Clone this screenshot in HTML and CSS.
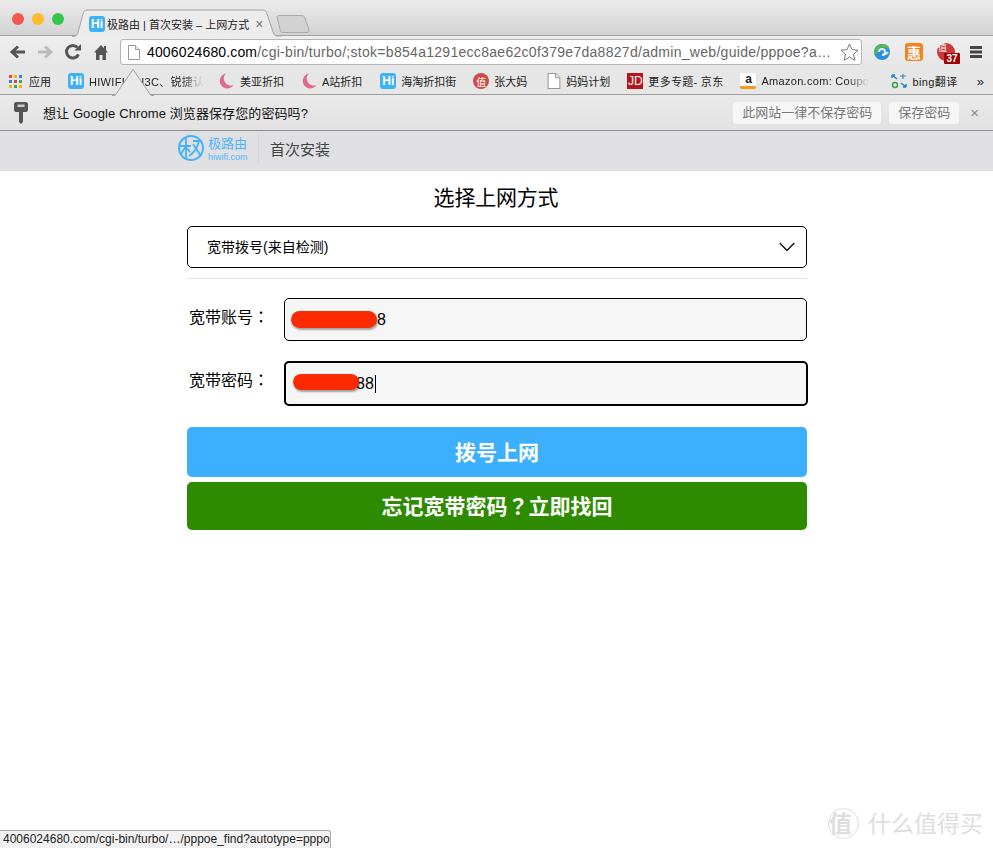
FILE: index.html
```html
<!DOCTYPE html>
<html lang="en">
<head>
  <meta charset="UTF-8">
  <title>极路由 | 首次安装 – 上网方式</title>
  <link rel="stylesheet" href="styles.css">
</head>
<body>
  <div class="tabstrip">
    <div class="lights">
      <span class="light red"></span>
      <span class="light yellow"></span>
      <span class="light green"></span>
    </div>
    <svg class="tab-shape" width="210" height="28" viewBox="0 0 210 28">
      <path d="M0 27.500h1c3 0 4-1 5-4L11 5c1-3 2-4 5-4h174c3 0 4 1 5 4l6 18c1 3 2 4 5 4h4" fill="#ececec" stroke="#a4a4a4"/>
    </svg>
    <div class="tab">
      <span class="hi hi-tab">Hi</span>
      <span class="tab-title">极路由 | 首次安装 – 上网方式</span>
      <span class="tab-close">×</span>
    </div>
    <svg class="new-tab" width="34" height="20" viewBox="0 0 34 20">
      <path d="M1 2c0-1 1-1.500 2-1.500h23c1 0 2 .5 2.500 1.500l4.500 13c.3 1.500-.5 2.500-2 2.500H7c-1 0-2-.5-2.500-1.500z" fill="#d2d2d2" stroke="#a8a8a8"/>
    </svg>
  </div>

  <div class="toolbar">
    <div class="nav">
      <svg width="18" height="16" viewBox="0 0 18 16"><path d="M17 8H5M10 2.500 4 8l6 5.500" fill="none" stroke="#555" stroke-width="3"/></svg>
      <svg width="18" height="16" viewBox="0 0 18 16"><path d="M2 8h12M9 2.500 15 8l-6 5.500" fill="none" stroke="#bbb" stroke-width="3"/></svg>
      <svg width="18" height="18" viewBox="0 0 18 18"><path d="M14.500 11.500A6.300 6.300 0 1 1 13.500 4.500" fill="none" stroke="#555" stroke-width="3"/><path d="M10.500 7.500H17V1z" fill="#555"/></svg>
      <svg width="18" height="16" viewBox="0 0 18 16"><path d="M9 1 2 8.500h2V16h3.500v-5h3v5H14V8.500h2L14 6.300V2h-2v2.200z" fill="#555"/></svg>
    </div>
    <div class="omnibox">
      <svg class="doc" width="12" height="15" viewBox="0 0 12 15"><path d="M.5.500h7l4 4v10H.5z" fill="#fff" stroke="#999"/><path d="M7.500.500v4h4" fill="#eee" stroke="#999"/></svg>
      <span class="url"><b>4006024680.com</b>/cgi-bin/turbo/;stok=b854a1291ecc8ae62c0f379e7da8827d/admin_web/guide/pppoe?a…</span>
      <svg class="star" width="19" height="18" viewBox="0 0 19 18"><path d="m9.500 1 2.500 5.600 6 .6-4.500 4 1.300 6-5.300-3.100-5.300 3.100 1.300-6-4.500-4 6-.6z" fill="#fff" stroke="#777"/></svg>
    </div>
    <div class="extensions">
      <svg width="18" height="18" viewBox="0 0 18 18"><circle cx="9" cy="9" r="8" fill="#2d8fd6"/><path d="M3 11A7 7 0 0 1 15 5" fill="none" stroke="#59b946" stroke-width="3"/><path d="M6 9a3 3 0 1 1 3 3c2 0 4 0 6-3" fill="none" stroke="#dff0f8" stroke-width="2"/></svg>
      <span class="ext-hui">惠</span>
      <span class="ext-seal"><span class="ext-glyph">值</span><span class="ext-badge">37</span></span>
      <svg width="14" height="14" viewBox="0 0 14 14"><path d="M1 2.500h12M1 7h12M1 11.500h12" stroke="#444" stroke-width="3"/></svg>
    </div>
  </div>

  <div class="bookmarks">
    <div class="bm bm-apps">
      <span class="apps-grid">
        <i class="g-r"></i><i class="g-y"></i><i class="g-b"></i>
        <i class="g-b"></i><i class="g-r"></i><i class="g-g"></i>
        <i class="g-y"></i><i class="g-g"></i><i class="g-y"></i>
      </span>
      <span>应用</span>
    </div>
    <div class="bm bm-hiwifi"><span class="hi">Hi</span><span class="bm-fade">HIWIFI、H3C、锐捷认</span></div>
    <div class="bm bm-moon-first"><svg class="moon" width="16" height="16" viewBox="0 0 16 16"><path d="M8 .5A7.500 7.500 0 1 0 15.500 12 7 7 0 0 1 8 .5z" fill="#dd6c8c"/></svg><span>美亚折扣</span></div>
    <div class="bm"><svg class="moon" width="16" height="16" viewBox="0 0 16 16"><path d="M8 .5A7.500 7.500 0 1 0 15.500 12 7 7 0 0 1 8 .5z" fill="#dd6c8c"/></svg><span>A站折扣</span></div>
    <div class="bm bm-haitao"><span class="hi">Hi</span><span>海淘折扣街</span></div>
    <div class="bm"><span class="seal">值</span><span>张大妈</span></div>
    <div class="bm bm-doc"><svg width="14" height="16" viewBox="0 0 12 15"><path d="M.5.500h7l4 4v10H.5z" fill="#fff" stroke="#999"/><path d="M7.500.500v4h4" fill="#eee" stroke="#999"/></svg><span>妈妈计划</span></div>
    <div class="bm bm-jd"><span class="jd">JD</span><span class="jd-text">更多专题- 京东</span></div>
    <div class="bm bm-amazon"><span class="amz">a</span><span class="bm-fade">Amazon.com: Coupo</span></div>
    <div class="bm"><svg width="16" height="16" viewBox="0 0 16 16"><path d="M1 2l5 4M1 2v3M1 2h3M15 14l-5-4M15 14v-3M15 14h-3" fill="none" stroke="#2a7fd0" stroke-width="1.500"/><circle cx="4" cy="12" r="2.500" fill="none" stroke="#3aa14a" stroke-width="1.500"/><path d="M9 3h6M12 1v5" stroke="#3a8fd0" stroke-width="1.200"/></svg><span class="bing-text">bing翻译</span></div>
    <span class="bm-more">»</span>
  </div>

  <div class="infobar">
    <svg class="key" width="14" height="22" viewBox="0 0 14 22"><path d="M0 2c0-1 1-2 2-2h10c1 0 2 1 2 2v6c0 1-1 2-2 2H9v10l-2 2-2-2v-10H2c-1 0-2-1-2-2z" fill="#555"/><rect x="3.500" y="2.500" width="7" height="2.500" fill="#ccc"/></svg>
    <span class="info-text">想让 Google Chrome 浏览器保存您的密码吗?</span>
    <div class="info-actions">
      <span class="info-btn info-btn-never">此网站一律不保存密码</span>
      <span class="info-btn info-btn-save">保存密码</span>
      <span class="info-close">×</span>
    </div>
  </div>
  <svg class="info-arrow" width="42" height="27" viewBox="0 0 42 27"><path d="M0 26.500h3L21 .5l18 26h3" fill="#e9e9e9" stroke="#a0a0a0"/></svg>

  <header class="site-header">
    <div class="site-inner">
      <svg class="logo" width="26" height="26" viewBox="0 0 26 26"><circle cx="13" cy="13" r="12" fill="none" stroke="#45b3fb" stroke-width="2"/><path d="M8 3v21M2 11h11M8 11 3 19M8 12l4 5M15 6h6c-1 5-4 11-10 15M15 9l8 12" fill="none" stroke="#45b3fb" stroke-width="1.800"/></svg>
      <div class="brand">
        <span class="brand-name">极路由</span>
        <span class="brand-url">hiwifi.com</span>
      </div>
      <span class="site-title">首次安装</span>
    </div>
  </header>

  <main class="content">
    <h1 class="page-title">选择上网方式</h1>
    <div class="select-box">
      <span class="select-text">宽带拨号(来自检测)</span>
      <svg width="16" height="10" viewBox="0 0 16 10"><path d="M.7 1 8 8.500 15.300 1" fill="none" stroke="#111" stroke-width="1.400"/></svg>
    </div>
    <hr class="rule">
    <div class="field">
      <label class="field-label">宽带账号<span class="cjk-mid">：</span></label>
      <div class="input input-first"><span class="blob blob-first"></span><span class="value">8</span></div>
    </div>
    <div class="field field-second">
      <label class="field-label">宽带密码<span class="cjk-mid">：</span></label>
      <div class="input input-focus"><span class="blob blob-second"></span><span class="value">88</span><span class="caret"></span></div>
    </div>
    <button class="btn btn-blue">拨号上网</button>
    <button class="btn btn-green">忘记宽带密码<span class="cjk-mid">？</span>立即找回</button>
  </main>

  <div class="watermark">
    <span class="wm-circle">值</span>
    <span class="wm-text">什么值得买</span>
  </div>
  <div class="status-tip">4006024680.com/cgi-bin/turbo/…/pppoe_find?autotype=pppo</div>
</body>
</html>
```

FILE: styles.css
```css
* {
  box-sizing: border-box;
}
html, body {
  height: 100%;
}
body {
  position: relative;
  margin: 0;
  height: 848px;
  overflow: hidden;
  background: #fff;
  color: #000;
  font-family: "Liberation Sans", "Noto Sans CJK SC", sans-serif;
}

/* tab strip */
.tabstrip {
  position: relative;
  display: flex;
  height: 36px;
  border-bottom: 1px solid #a4a4a4;
  background: linear-gradient(#ececec, #d2d2d2);
}
.lights {
  display: flex;
  gap: 8px;
  padding: 13px 0 0 12px;
}
.light {
  width: 12px;
  height: 12px;
  border-radius: 50%;
}
.red { background: #f4574f; }
.yellow { background: #fcbc2d; }
.green { background: #34c84a; }
.tab-shape {
  position: absolute;
  left: 72px;
  top: 9px;
}
.tab {
  position: absolute;
  left: 89px;
  top: 15px;
  display: flex;
  align-items: center;
  height: 17px;
}
.hi {
  display: flex;
  align-items: center;
  justify-content: center;
  flex: none;
  width: 16px;
  height: 16px;
  border-radius: 3px;
  background: #3fb1f5;
  color: #fff;
  font-size: 12px;
  font-weight: bold;
}
.tab-title {
  margin-left: 2px;
  font-size: 11px;
  white-space: nowrap;
  color: #222;
}
.tab-close {
  margin-left: 6px;
  font-size: 14px;
  color: #777;
}
.new-tab {
  position: absolute;
  left: 276px;
  top: 15px;
}

/* toolbar */
.toolbar {
  display: flex;
  align-items: center;
  height: 32px;
  background: linear-gradient(#eee, #e6e6e6);
}
.nav {
  display: flex;
  align-items: center;
  gap: 10px;
  width: 120px;
  padding-left: 8px;
}
.omnibox {
  display: flex;
  align-items: center;
  width: 742px;
  height: 26px;
  padding: 0 2px 0 7px;
  border: 1px solid #b5b5b5;
  border-radius: 3px;
  background: #fff;
}
.url {
  flex: 1;
  margin-left: 7px;
  overflow: hidden;
  font-size: 14px;
  letter-spacing: .29px;
  white-space: nowrap;
  color: #666;
}
.url b {
  font-weight: normal;
  letter-spacing: .14px;
  color: #000;
}
.extensions {
  display: flex;
  align-items: center;
  gap: 14px;
  padding-left: 11px;
}
.ext-hui {
  display: flex;
  align-items: center;
  justify-content: center;
  width: 18px;
  height: 18px;
  border-radius: 3px;
  background: #f58220;
  color: #fff;
  font-size: 14px;
  font-weight: bold;
}
.ext-seal {
  position: relative;
  width: 18px;
  height: 18px;
  border-radius: 50%;
  background: #c9383a;
  color: #fff;
}
.ext-glyph {
  position: absolute;
  left: 1px;
  top: 0;
  font-size: 9px;
  line-height: 10px;
}
.ext-badge {
  position: absolute;
  left: 7px;
  top: 10px;
  width: 16px;
  height: 11px;
  border-radius: 1px;
  background: #a00000;
  font-size: 10px;
  font-weight: bold;
  line-height: 11px;
  text-align: center;
}

/* bookmarks */
.bookmarks {
  position: relative;
  display: flex;
  align-items: center;
  gap: 17px;
  height: 27px;
  padding-left: 9px;
  border-bottom: 1px solid #a0a0a0;
  background: #e6e6e6;
  font-size: 11px;
  color: #222;
}
.bm {
  display: flex;
  align-items: center;
  flex: none;
  gap: 5px;
  white-space: nowrap;
}
.bm-apps { gap: 7px; }
.bm-hiwifi { width: 135px; margin-right: -2px; }
.bm-moon-first { gap: 6px; }
.bm-haitao { margin-left: 1px; }
.bm-doc { margin-left: 3px; }
.bm-amazon { width: 134px; }
.bm-fade {
  letter-spacing: .3px;
  -webkit-mask-image: linear-gradient(90deg, #000 80%, transparent);
  mask-image: linear-gradient(90deg, #000 80%, transparent);
}
.jd-text { letter-spacing: .3px; }
.bing-text { letter-spacing: .4px; }
.apps-grid {
  display: grid;
  grid-template-columns: repeat(3, 3px);
  gap: 2px;
}
.apps-grid i {
  height: 3px;
}
.g-r { background: #e2483b; }
.g-y { background: #f5b400; }
.g-b { background: #3b7de2; }
.g-g { background: #36a852; }
.seal {
  display: flex;
  align-items: center;
  justify-content: center;
  width: 16px;
  height: 16px;
  border-radius: 50%;
  background: #cf4a45;
  color: #fff;
  font-size: 10px;
}
.jd {
  display: flex;
  align-items: center;
  justify-content: center;
  width: 16px;
  height: 16px;
  background: #b8141c;
  color: #fff;
  font-size: 12px;
}
.amz {
  display: flex;
  align-items: flex-start;
  justify-content: center;
  width: 16px;
  height: 16px;
  border-bottom: 3px solid #f49a1a;
  border-radius: 2px;
  background: #fff;
  font-size: 12px;
  font-weight: bold;
  line-height: 12px;
}
.bm-more {
  margin-left: 2px;
  font-size: 13px;
}

/* save password bar */
.infobar {
  display: flex;
  align-items: center;
  height: 36px;
  padding-left: 14px;
  border-bottom: 1px solid #8e8e8e;
  background: linear-gradient(#e9e9e9, #e2e2e2);
}
.info-text {
  margin-left: 15px;
  font-size: 13px;
  letter-spacing: .1px;
  color: #111;
}
.info-actions {
  display: flex;
  align-items: center;
  margin-left: auto;
  padding-right: 14px;
}
.info-btn {
  height: 22px;
  border-radius: 3px;
  background: #f6f6f6;
  font-size: 13px;
  line-height: 22px;
  text-align: center;
  color: #777;
}
.info-btn-never { width: 148px; }
.info-btn-save {
  width: 70px;
  margin-left: 8px;
}
.info-close {
  margin-left: 11px;
  font-size: 15px;
  color: #888;
}
.info-arrow {
  position: absolute;
  left: 112px;
  top: 69px;
}

/* router page */
.site-header {
  height: 40px;
  background: #e0e0e2;
}
.site-inner {
  display: flex;
  align-items: center;
  height: 34px;
  padding-left: 178px;
}
.brand {
  display: flex;
  flex-direction: column;
  width: 51px;
  margin-left: 4px;
  padding-top: 2px;
  border-right: 1px solid #d6d6d8;
  color: #4db5ff;
}
.brand-name {
  font-size: 13px;
  line-height: 16px;
}
.brand-url {
  font-size: 9px;
  line-height: 11px;
}
.site-title {
  margin-left: 11px;
  font-size: 15px;
  color: #444;
}
.content {
  width: 620px;
  margin-left: 187px;
}
.page-title {
  margin: 0;
  height: 55px;
  padding: 12px 2px 0 0;
  font-size: 21px;
  font-weight: normal;
  letter-spacing: -.2px;
  line-height: 30px;
  text-align: center;
}
.select-box {
  display: flex;
  align-items: center;
  justify-content: space-between;
  height: 42px;
  padding: 0 11px 0 19px;
  border: 1px solid #000;
  border-radius: 5px;
  font-size: 14px;
}
.select-text {
  padding-bottom: 2px;
}
.rule {
  height: 1px;
  margin: 10px 0 19px;
  border: 0;
  background: #e4e4e4;
}
.field {
  display: flex;
  align-items: center;
}
.field-second {
  width: 621px;
  margin-top: 20px;
}
.field-label {
  flex: none;
  width: 97px;
  padding: 0 0 7px 2px;
  font-size: 16px;
}
.field-second .field-label {
  padding-bottom: 9px;
}
/* TC cut sets the full-width colon and question mark mid-cell, as the reference does */
.cjk-mid {
  font-family: "Noto Sans CJK TC", sans-serif;
}
.input {
  position: relative;
  display: flex;
  align-items: center;
  flex: 1;
  border: 1px solid #000;
  border-radius: 5px;
  background: #f6f6f6;
  font-size: 16px;
}
.input-first {
  height: 43px;
  padding-left: 92px;
}
.input-focus {
  height: 45px;
  padding-left: 70px;
  border-width: 2px;
}
.blob {
  position: absolute;
  border-radius: 9px;
  background: #fb2a00;
  box-shadow: 1px 2px 2px rgba(0, 0, 0, .35);
}
.blob-first {
  left: 6px;
  top: 12px;
  width: 86px;
  height: 17px;
}
.blob-second {
  left: 7px;
  top: 11px;
  width: 66px;
  height: 16px;
}
.caret {
  width: 1px;
  height: 18px;
  margin-left: 1px;
  background: #000;
}
.btn {
  display: block;
  width: 620px;
  border: 0;
  border-radius: 5px;
  padding: 0 0 2px;
  color: #fff;
  font-family: inherit;
  font-size: 21px;
  font-weight: bold;
}
.btn-blue {
  height: 50px;
  margin-top: 21px;
  background: #3cb0ff;
}
.btn-green {
  height: 48px;
  margin-top: 5px;
  background: #2e8b00;
}

/* overlays */
.watermark {
  position: absolute;
  left: 828px;
  top: 808px;
  display: flex;
  align-items: center;
  gap: 9px;
  color: #dedede;
}
.wm-circle {
  display: flex;
  align-items: center;
  width: 31px;
  height: 31px;
  border: 1px solid #dedede;
  border-radius: 50%;
  font-size: 23px;
  font-weight: bold;
  line-height: 28px;
}
.wm-text {
  font-size: 23px;
  line-height: 30px;
}
.status-tip {
  position: absolute;
  left: 0;
  bottom: 0;
  width: 331px;
  height: 18px;
  padding-left: 3px;
  overflow: hidden;
  border: 1px solid #aaa;
  border-width: 1px 1px 0 0;
  border-top-right-radius: 3px;
  background: #f1f1f1;
  font-size: 12px;
  line-height: 17px;
  white-space: nowrap;
  color: #222;
}
```
